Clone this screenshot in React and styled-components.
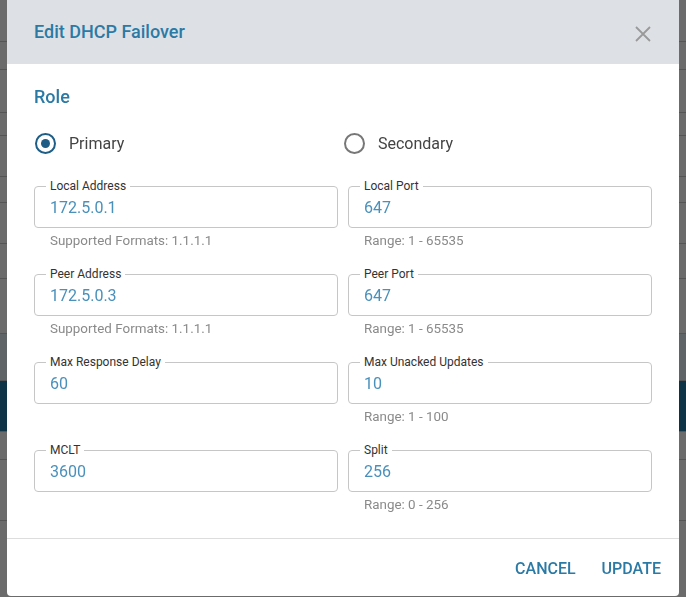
import React, { useState } from "react";
import styled, { createGlobalStyle } from "styled-components";

const fields = [
  { label: "Local Address", value: "172.5.0.1", helper: "Supported Formats: 1.1.1.1" },
  { label: "Local Port", value: "647", helper: "Range: 1 - 65535" },
  { label: "Peer Address", value: "172.5.0.3", helper: "Supported Formats: 1.1.1.1" },
  { label: "Peer Port", value: "647", helper: "Range: 1 - 65535" },
  { label: "Max Response Delay", value: "60", helper: "" },
  { label: "Max Unacked Updates", value: "10", helper: "Range: 1 - 100" },
  { label: "MCLT", value: "3600", helper: "" },
  { label: "Split", value: "256", helper: "Range: 0 - 256" },
];

const backdropRows = [41, 69, 112, 135, 176, 202, 243, 278, 333, 380, 431, 459, 520];

const App = () => {
  const [role, setRole] = useState("primary");

  return (
    <>
      <GlobalStyle />
      <Backdrop>
        {backdropRows.map((top, i) => (
          <BackdropRow
            key={top}
            $height={(backdropRows[i + 1] || 597) - top}
            $dark={top === 380}
            $light={top === 333}
          />
        ))}
      </Backdrop>
      <Modal>
        <Header>
          <Title>Edit DHCP Failover</Title>
          <CloseButton aria-label="close">
            <svg width="16" height="16" viewBox="0 0 16 16">
              <path d="M1 1L15 15M15 1L1 15" stroke="#999" strokeWidth="1.8" fill="none" />
            </svg>
          </CloseButton>
        </Header>
        <Body>
          <SectionTitle>Role</SectionTitle>
          <RadioRow>
            <RadioOption onClick={() => setRole("primary")}>
              <RadioCircle $checked={role === "primary"} />
              Primary
            </RadioOption>
            <RadioOption onClick={() => setRole("secondary")}>
              <RadioCircle $checked={role === "secondary"} />
              Secondary
            </RadioOption>
          </RadioRow>
          <FieldGrid>
            {fields.map((f) => (
              <FieldCell key={f.label}>
                <FieldBox>
                  <FieldLabel>{f.label}</FieldLabel>
                  <FieldInput defaultValue={f.value} />
                </FieldBox>
                <Helper>{f.helper}</Helper>
              </FieldCell>
            ))}
          </FieldGrid>
        </Body>
        <Footer>
          <TextButton>CANCEL</TextButton>
          <TextButton>UPDATE</TextButton>
        </Footer>
      </Modal>
    </>
  );
};

export default App;

const GlobalStyle = createGlobalStyle`
  html, body {
    margin: 0;
    padding: 0;
    height: 597px;
    overflow: hidden;
    font-family: Roboto, "Noto Sans", sans-serif;
  }
`;

const Backdrop = styled.div`
  display: flex;
  flex-direction: column;
  height: 597px;
  background: #6b6b6b;
  padding-top: 41px;
  box-sizing: border-box;
`;

const BackdropRow = styled.div`
  height: ${(p) => p.$height}px;
  box-sizing: border-box;
  border-top: 1px solid #555;
  background: ${(p) => (p.$dark ? "#0e3246" : p.$light ? "#5f6466" : "#6b6b6b")};
`;

const Modal = styled.div`
  position: fixed;
  left: 7px;
  top: 0;
  width: 672px;
  height: 596px;
  background: #fff;
  border-radius: 0 0 4px 4px;
  display: flex;
  flex-direction: column;
  overflow: hidden;
`;

const Header = styled.div`
  height: 64px;
  flex-shrink: 0;
  background: #dde1e5;
  display: flex;
  align-items: center;
  justify-content: space-between;
  padding: 0 27px 2px 27px;
  box-sizing: border-box;
`;

const Title = styled.h2`
  margin: 0;
  font-size: 18px;
  font-weight: 500;
  color: #2b7aa6;
`;

const CloseButton = styled.button`
  border: none;
  background: none;
  padding: 0;
  margin-top: 6px;
  margin-right: 1px;
  display: flex;
  cursor: pointer;
`;

const Body = styled.div`
  padding: 23px 27px 25px 27px;
  flex: 1;
`;

const SectionTitle = styled.div`
  font-size: 18px;
  font-weight: 500;
  line-height: 20px;
  color: #2b7aa6;
`;

const RadioRow = styled.div`
  display: grid;
  grid-template-columns: 309px 1fr;
  margin-top: 24px;
  height: 24px;
`;

const RadioOption = styled.label`
  display: flex;
  align-items: center;
  gap: 13px;
  font-size: 16px;
  color: #444;
  cursor: pointer;
  padding-left: 1px;
`;

const RadioCircle = styled.span`
  width: 21px;
  height: 21px;
  box-sizing: border-box;
  border-radius: 50%;
  border: 2px solid ${(p) => (p.$checked ? "#1d5d86" : "#777")};
  display: flex;
  align-items: center;
  justify-content: center;

  &::after {
    content: "";
    width: 9px;
    height: 9px;
    border-radius: 50%;
    background: ${(p) => (p.$checked ? "#1d5d86" : "transparent")};
  }
`;

const FieldGrid = styled.div`
  display: grid;
  grid-template-columns: 304px 304px;
  column-gap: 10px;
  row-gap: 25px;
  margin-top: 31px;
`;

const FieldCell = styled.div`
  display: flex;
  flex-direction: column;
`;

const FieldBox = styled.div`
  position: relative;
  height: 42px;
  box-sizing: border-box;
  border: 1px solid #c6c6c6;
  border-radius: 4px;
  display: flex;
  align-items: center;
`;

const FieldLabel = styled.span`
  position: absolute;
  left: 11px;
  top: -8px;
  padding: 0 4px;
  background: #fff;
  font-size: 12px;
  line-height: 14px;
  color: #333;
`;

const FieldInput = styled.input`
  border: none;
  outline: none;
  background: transparent;
  width: 100%;
  padding: 0 15px;
  font-family: inherit;
  font-size: 16px;
  color: #4990bb;
`;

const Helper = styled.div`
  margin-top: 5px;
  padding-left: 16px;
  height: 16px;
  font-size: 13.4px;
  line-height: 16px;
  color: #8a8a8a;
`;

const Footer = styled.div`
  border-top: 1px solid #ddd;
  height: 59px;
  flex-shrink: 0;
  box-sizing: border-box;
  display: flex;
  align-items: center;
  justify-content: flex-end;
  gap: 10px;
  padding: 0 10px 0 0;
`;

const TextButton = styled.button`
  border: none;
  background: none;
  padding: 6px 8px;
  font-family: inherit;
  font-size: 16px;
  font-weight: 500;
  color: #2b7aa6;
  cursor: pointer;
`;
